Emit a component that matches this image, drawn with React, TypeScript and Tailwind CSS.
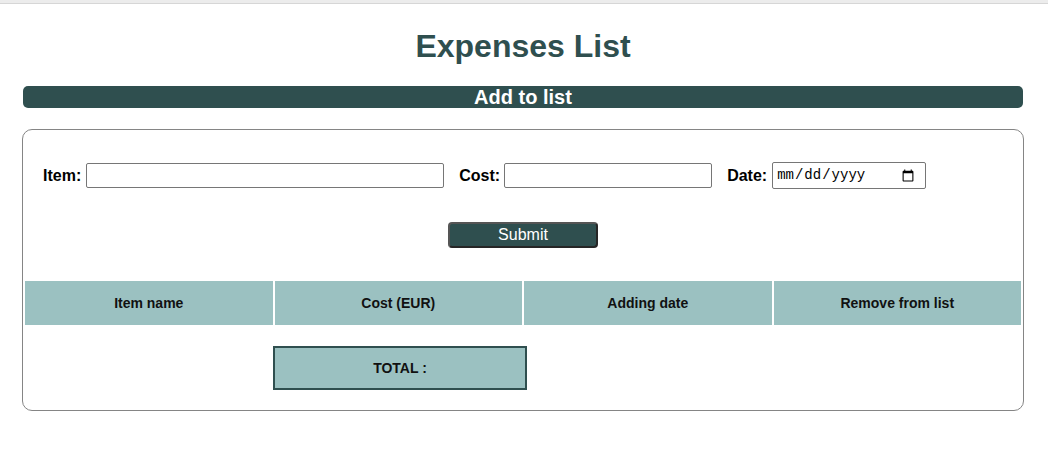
import React from 'react';

const columns = ['Item name', 'Cost (EUR)', 'Adding date', 'Remove from list'];

export default function App() {
  return (
    <div className="min-h-screen bg-white font-['Liberation_Sans',Arial,sans-serif] text-black">
      <div className="h-[4px] bg-[#ececec] border-b border-[#d6d6d6]" />

      <div className="w-[1046px]">
        <h1 className="mt-[24px] text-center text-[32px] leading-[37px] font-bold text-[#2f4f4f]">
          Expenses List
        </h1>

        <div className="ml-[23px] mt-[21px] h-[22px] w-[1000px] rounded-[5px] bg-[#2f4f4f] text-center text-[20px] leading-[22px] font-bold text-white">
          Add to list
        </div>

        <div className="ml-[22px] mt-[21px] w-[1002px] rounded-[10px] border border-[#858585] pt-[32px] pb-[20px]">
          <form className="flex items-center pl-[20px]" onSubmit={(e) => e.preventDefault()}>
            <label className="flex items-center text-[16px] font-bold">
              Item:
              <input
                type="text"
                className="ml-[5px] h-[25px] w-[358px] rounded-[2px] border border-[#767676] bg-white px-[2px] outline-none"
              />
            </label>
            <label className="ml-[15px] flex items-center text-[16px] font-bold">
              Cost:
              <input
                type="text"
                className="ml-[4px] h-[25px] w-[208px] rounded-[2px] border border-[#767676] bg-white px-[2px] outline-none"
              />
            </label>
            <label className="ml-[15px] flex items-center text-[16px] font-bold">
              Date:
              <input
                type="date"
                className="ml-[5px] h-[27px] w-[154px] rounded-[2px] border border-[#767676] bg-white pl-[3px] pr-[8px] font-['Liberation_Mono',monospace] text-[14px] font-normal outline-none"
              />
            </label>
          </form>

          <div className="mt-[33px] flex justify-center">
            <button
              type="button"
              className="h-[26px] w-[150px] rounded-[4px] border-2 border-[#262626] border-t-[#555] border-l-[#555] bg-[#2f4f4f] text-[16px] leading-[20px] text-white"
            >
              Submit
            </button>
          </div>

          <div className="mt-[33px] grid grid-cols-4 gap-[2px] px-[2px]">
            {columns.map((c) => (
              <div
                key={c}
                className="flex h-[44px] items-center justify-center bg-[#9bc1c1] text-[14px] font-bold text-[#111]"
              >
                {c}
              </div>
            ))}
          </div>

          <div className="mt-[21px] flex">
            <div className="w-[250px]" />
            <div className="flex h-[44px] w-[254px] items-center justify-center border-2 border-[#2f4f4f] bg-[#9bc1c1] text-[14px] font-bold text-[#111]">
              TOTAL :
            </div>
          </div>
        </div>
      </div>
    </div>
  );
}
